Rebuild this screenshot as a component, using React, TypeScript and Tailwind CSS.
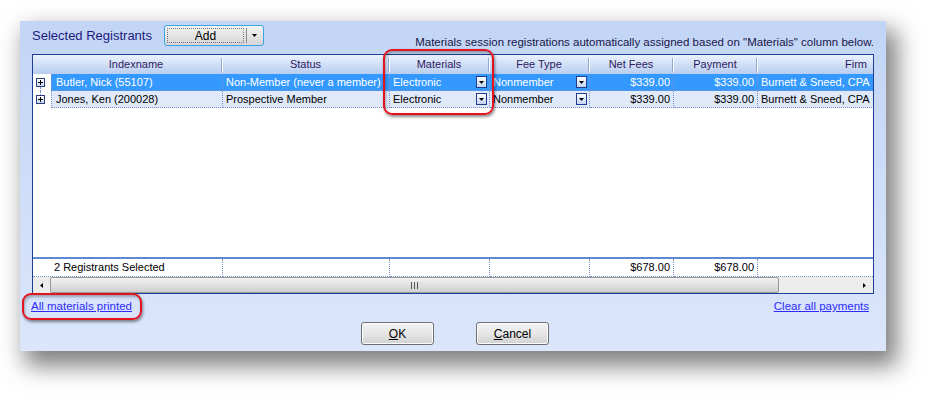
import React from 'react';

const W = { exp: 18, name: 172, status: 167, mat: 100, fee: 100, net: 84, pay: 84, firm: 198 };

const dot = 'border-dotted border-[#7891c6]';

function DropBtn() {
  return (
    <span className="ml-auto mr-[2px] flex h-[12px] w-[11px] shrink-0 items-center justify-center border border-[#1f3c8e] bg-gradient-to-b from-white to-[#c3d5f2]">
      <svg width="5" height="3" viewBox="0 0 5 3"><path d="M0 0h5L2.5 3z" fill="#000" /></svg>
    </span>
  );
}

function PlusBox() {
  return (
    <span className="flex h-[9px] w-[9px] items-center justify-center border border-[#2b3f7c] bg-gradient-to-b from-white to-[#c9d7ee]">
      <svg width="5" height="5" viewBox="0 0 5 5"><path d="M0 2.5h5M2.5 0v5" stroke="#000" strokeWidth="1" /></svg>
    </span>
  );
}

function HeadCell({ w, label }: { w: number; label: string }) {
  return (
    <div className="flex shrink-0 items-center" style={{ width: w }}>
      <span className="flex-1 truncate text-center">{label}</span>
      <span className="h-[14px] w-[2px] shrink-0 border-l border-r border-l-[#8fa8d6] border-r-white" />
    </div>
  );
}

type Row = { name: string; status: string; sel: boolean; top: boolean };

function DataRow({ name, status, sel, top }: Row) {
  const bg = sel ? 'bg-[#3399ff] text-white' : 'bg-[#dfe9fa] text-black';
  const cell = `flex h-full shrink-0 items-center border-r border-b ${dot}`;
  return (
    <div className="flex h-[17px]">
      <div className="relative flex h-full shrink-0 items-center bg-white pl-[3px]" style={{ width: W.exp }}>
        <PlusBox />
        <span className={`absolute left-[7px] w-0 border-l border-dotted border-[#7891c6] ${top ? 'top-[13px] bottom-0' : 'top-0 h-[4px]'}`} />
      </div>
      <div className={`${bg} flex`}>
        <div className={`${cell} pl-[4px] border-l`} style={{ width: W.name }}>{name}</div>
        <div className={`${cell} pl-[3px]`} style={{ width: W.status }}>{status}</div>
        <div className={`${cell} pl-[3px]`} style={{ width: W.mat }}>Electronic<DropBtn /></div>
        <div className={`${cell} pl-[3px]`} style={{ width: W.fee }}>Nonmember<DropBtn /></div>
        <div className={`${cell} justify-end pr-[3px]`} style={{ width: W.net }}>$339.00</div>
        <div className={`${cell} justify-end pr-[3px]`} style={{ width: W.pay }}>$339.00</div>
        <div className={`${cell} whitespace-nowrap pl-[3px]`} style={{ width: W.firm }}>Burnett &amp; Sneed, CPA</div>
      </div>
    </div>
  );
}

function Annot({ className }: { className: string }) {
  return (
    <div
      className={`pointer-events-none absolute rounded-[9px] border-[2.5px] border-[#e3141e] shadow-[1px_2px_3px_rgba(0,0,0,0.45),inset_1px_2px_3px_rgba(0,0,0,0.3)] ${className}`}
    />
  );
}

function WinButton({ children }: { children: React.ReactNode }) {
  return (
    <button className="flex h-[23px] w-[73px] items-center justify-center rounded-[3px] border border-[#707070] bg-gradient-to-b from-[#f3f3f3] via-[#e6e6e6] to-[#d2d2d2] text-[12px] text-black shadow-[inset_0_0_0_1px_#fcfcfc]">
      {children}
    </button>
  );
}

export default function App() {
  return (
    <div className="relative h-[406px] w-[940px] overflow-hidden bg-white pl-[20px] pt-[21px] font-[family-name:'Liberation_Sans',Arial,sans-serif] text-[11px]">
      <div className="flex h-[330px] w-[866px] flex-col bg-gradient-to-b from-[#c2d5f5] to-[#dbe6fb] px-[12px] shadow-[8px_12px_22px_3px_rgba(0,0,0,0.5)]">
        {/* top bar */}
        <div className="flex h-[33px] shrink-0 justify-between">
          <div className="flex items-start pt-[4px]">
            <span className="mt-[1px] text-[13px] text-[#1c1a7e]">Selected Registrants</span>
            <div className="ml-[12px] flex h-[21px] w-[100px] rounded-[3px] border border-[#3ca4e0] bg-gradient-to-b from-[#f4f4f4] to-[#d6d6d6] p-[2px]">
              <div className="flex flex-1 items-center justify-center border border-dotted border-[#777] text-[12px] text-black">Add</div>
              <div className="mx-[2px] w-px bg-[#8a8a8a]" />
              <div className="flex w-[12px] items-center justify-center">
                <svg width="5" height="3" viewBox="0 0 5 3"><path d="M0 0h5L2.5 3z" fill="#000" /></svg>
              </div>
            </div>
          </div>
          <span className="self-end pb-[3px] text-[11.5px] text-[#17174a]">
            Materials session registrations automatically assigned based on "Materials" column below.
          </span>
        </div>

        {/* grid */}
        <div className="flex h-[240px] shrink-0 flex-col overflow-hidden border border-[#1d3f96] bg-white">
          <div className="flex h-[19px] shrink-0 bg-gradient-to-b from-[#eaf1fc] to-[#b8cdf0] text-[#2e1a5e]">
            <div className="shrink-0" style={{ width: W.exp }} />
            <HeadCell w={W.name} label="Indexname" />
            <HeadCell w={W.status} label="Status" />
            <HeadCell w={W.mat} label="Materials" />
            <HeadCell w={W.fee} label="Fee Type" />
            <HeadCell w={W.net} label="Net Fees" />
            <HeadCell w={W.pay} label="Payment" />
            <HeadCell w={W.firm} label="Firm" />
          </div>
          <DataRow name="Butler, Nick (55107)" status="Non-Member (never a member)" sel top />
          <DataRow name="Jones, Ken (200028)" status="Prospective Member" sel={false} top={false} />
          <div className="flex-1" />
          {/* summary */}
          <div className="flex h-[20px] shrink-0 border-t-2 border-t-[#5f89cf] text-black">
            <div className={`flex h-full shrink-0 items-center border-r border-b pl-[21px] ${dot}`} style={{ width: W.exp + W.name }}>2 Registrants Selected</div>
            <div className={`h-full shrink-0 border-r border-b ${dot}`} style={{ width: W.status }} />
            <div className={`h-full shrink-0 border-r border-b ${dot}`} style={{ width: W.mat }} />
            <div className={`h-full shrink-0 border-r border-b ${dot}`} style={{ width: W.fee }} />
            <div className={`flex h-full shrink-0 items-center justify-end border-r border-b pr-[3px] ${dot}`} style={{ width: W.net }}>$678.00</div>
            <div className={`flex h-full shrink-0 items-center justify-end border-r border-b pr-[3px] ${dot}`} style={{ width: W.pay }}>$678.00</div>
            <div className={`h-full flex-1 shrink-0 border-b ${dot}`} />
          </div>
          {/* scrollbar */}
          <div className="flex h-[16px] shrink-0 bg-[#ececec]">
            <div className="flex w-[17px] items-center justify-center">
              <svg width="3" height="5" viewBox="0 0 3 5"><path d="M3 0v5L0 2.5z" fill="#000" /></svg>
            </div>
            <div className="flex w-[729px] items-center justify-center rounded-[2px] border border-[#9a9a9a] bg-gradient-to-b from-[#f2f2f2] to-[#d0d0d0]">
              <div className="flex gap-[2px]">
                <span className="h-[7px] w-px bg-[#555]" />
                <span className="h-[7px] w-px bg-[#555]" />
                <span className="h-[7px] w-px bg-[#555]" />
              </div>
            </div>
            <div className="flex flex-1 items-center justify-end pr-[7px]">
              <svg width="3" height="5" viewBox="0 0 3 5"><path d="M0 0v5L3 2.5z" fill="#000" /></svg>
            </div>
          </div>
        </div>

        {/* links */}
        <div className="flex h-[26px] shrink-0 items-start justify-between pt-[4px] text-[11.5px] text-[#2f2bff]">
          <a className="-ml-[1px] underline">All materials printed</a>
          <a className="mr-[5px] underline">Clear all payments</a>
        </div>

        {/* buttons */}
        <div className="mt-[2px] flex justify-center gap-[42px] pl-[4px]">
          <WinButton><span className="underline">O</span>K</WinButton>
          <WinButton><span className="underline">C</span>ancel</WinButton>
        </div>
      </div>

      <Annot className="left-[383px] top-[49px] h-[66px] w-[111px]" />
      <Annot className="left-[22px] top-[293px] h-[27px] w-[120px]" />
    </div>
  );
}
